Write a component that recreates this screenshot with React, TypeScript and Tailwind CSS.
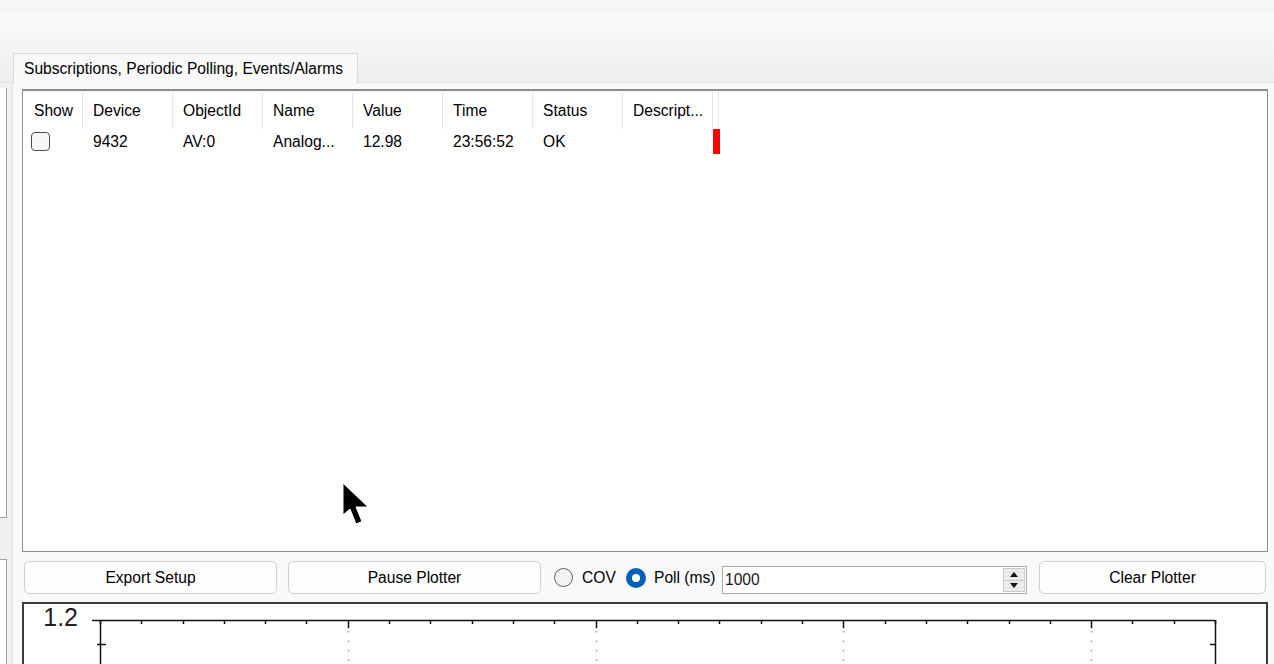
import React from 'react';

const columns = [
  { key: 'device', label: 'Device' },
  { key: 'objectId', label: 'ObjectId' },
  { key: 'name', label: 'Name' },
  { key: 'value', label: 'Value' },
  { key: 'time', label: 'Time' },
  { key: 'status', label: 'Status' },
  { key: 'description', label: 'Descript...' },
];

const row: Record<string, string> = {
  device: '9432',
  objectId: 'AV:0',
  name: 'Analog...',
  value: '12.98',
  time: '23:56:52',
  status: 'OK',
  description: '',
};

function Plotter() {
  // tick spacing on the top axis: 27 steps from x=76 to x=1191
  const step = (1191 - 76) / 27;
  const ticks = Array.from({ length: 28 }, (_, i) => 76 + i * step);

  return (
    <div className="w-[1246px] h-[80px] mt-[8px] border-2 border-[#3c3c3c] bg-white">
      <svg width="1242" height="76" className="block">
        <text
          x="54"
          y="22"
          textAnchor="end"
          fontSize="25"
          fill="#1f1f1f"
          fontFamily="'Liberation Sans', Arial, sans-serif"
        >
          1.2
        </text>
        <line x1="68" y1="16.5" x2="1191" y2="16.5" stroke="#111" strokeWidth="1.5" />
        <line x1="76.5" y1="16" x2="76.5" y2="76" stroke="#111" strokeWidth="1.5" />
        <line x1="1191.5" y1="16" x2="1191.5" y2="76" stroke="#111" strokeWidth="1.5" />
        <line x1="73" y1="40.5" x2="82" y2="40.5" stroke="#111" strokeWidth="1.5" />
        <line x1="1186" y1="40.5" x2="1191" y2="40.5" stroke="#111" strokeWidth="1.5" />
        {ticks.map((x, i) => {
          const major = i % 6 === 0 && i > 0;
          const xr = Math.round(x) + 0.5;
          return (
            <g key={i}>
              <line x1={xr} y1="16" x2={xr} y2={major ? 24 : 20} stroke="#111" strokeWidth="1.5" />
              {major && (
                <line
                  x1={xr}
                  y1="27"
                  x2={xr}
                  y2="76"
                  stroke="#9a9a9a"
                  strokeWidth="1.5"
                  strokeDasharray="1.5 8"
                />
              )}
            </g>
          );
        })}
      </svg>
    </div>
  );
}

export default function App() {
  return (
    <div className="relative w-[1274px] h-[664px] overflow-hidden bg-[#f9f9f9] text-[15.6px] text-black font-['Liberation_Sans',Arial,sans-serif]">
      <div className="h-[14px] bg-[#f6f6f6]" />
      <div className="h-[69px] bg-gradient-to-b from-[#fbfbfb] to-[#eeeeee] border-b border-[#e3e3e3] flex items-end pl-[13px]">
        <div className="h-[30px] w-[345px] -mb-px pl-[10px] flex items-center bg-[#f9f9f9] border border-b-0 border-[#d9d9d9] whitespace-nowrap">
          Subscriptions, Periodic Polling, Events/Alarms
        </div>
      </div>

      <div className="flex h-[581px]">
        {/* left docked panels */}
        <div className="w-[12px] bg-[#f0f0f0] flex flex-col">
          <div className="w-[7px] h-[430px] mt-[5px] bg-[#fcfcfc] border-r border-b border-[#a0a0a0]" />
          <div className="w-[7px] flex-1 mt-[41px] bg-[#fcfcfc] border-r border-t border-[#a0a0a0]" />
        </div>

        {/* tab page */}
        <div className="flex-1 border-l border-[#e3e3e3] pl-[9px] pt-[6px]">
          <div className="w-[1246px] h-[463px] bg-white border border-t-2 border-[#8a8d92]">
            <div className="flex h-[37px] mt-px">
              <div className="w-[60px] pl-[11px] flex items-center border-r border-[#e5e5e5]">Show</div>
              {columns.map((c) => (
                <div
                  key={c.key}
                  className="w-[90px] pl-[10px] flex items-center border-r border-[#e5e5e5] whitespace-nowrap"
                >
                  {c.label}
                </div>
              ))}
              <div className="w-[6px] border-r border-[#e5e5e5]" />
            </div>
            <div className="flex h-[25px]">
              <div className="w-[60px] pl-[8px] flex items-center">
                <div className="w-[19px] h-[19px] rounded-[4px] border border-[#4d4d4d] bg-[#f7f7f7]" />
              </div>
              {columns.map((c) => (
                <div key={c.key} className="w-[90px] pl-[10px] flex items-center whitespace-nowrap">
                  {row[c.key]}
                </div>
              ))}
              <div className="w-[7px] bg-[#ff0000]" />
            </div>
          </div>

          {/* controls */}
          <div className="flex items-center h-[33px] mt-[9px] pl-[2px]">
            <button className="w-[253px] h-[33px] rounded-[5px] border border-[#d0d0d0] bg-[#fdfdfd]">
              Export Setup
            </button>
            <button className="w-[253px] h-[33px] ml-[11px] rounded-[5px] border border-[#d0d0d0] bg-[#fdfdfd]">
              Pause Plotter
            </button>
            <div className="ml-[13px] w-[19px] h-[19px] rounded-full border border-[#5c5c5c] bg-[#f3f3f3]" />
            <span className="ml-[9px] w-[35px] whitespace-nowrap">COV</span>
            <div className="ml-[9px] w-[20px] h-[20px] rounded-full bg-[#005fb8] flex items-center justify-center">
              <div className="w-[8px] h-[8px] rounded-full bg-white" />
            </div>
            <span className="ml-[8px] w-[59px] whitespace-nowrap">Poll (ms)</span>
            <div className="ml-[9px] w-[305px] h-[28px] mt-[5px] border border-[#ababab] bg-white flex">
              <div className="flex-1 pl-[2px] flex items-center text-[#1a1a1a]">1000</div>
              <div className="w-[22px] mr-[1px] my-[1px] border border-[#c8c8c8] bg-[#ececec] flex flex-col">
                <div className="flex-1 flex items-center justify-center border-b border-[#c8c8c8]">
                  <svg width="8" height="5" viewBox="0 0 8 5">
                    <path d="M0 5 L4 0 L8 5 Z" fill="#111" />
                  </svg>
                </div>
                <div className="flex-1 flex items-center justify-center">
                  <svg width="8" height="5" viewBox="0 0 8 5">
                    <path d="M0 0 L8 0 L4 5 Z" fill="#111" />
                  </svg>
                </div>
              </div>
            </div>
            <button className="w-[227px] h-[33px] ml-[12px] rounded-[5px] border border-[#d0d0d0] bg-[#fdfdfd]">
              Clear Plotter
            </button>
          </div>

          <Plotter />
        </div>
      </div>

      {/* mouse pointer */}
      <svg className="absolute left-[342px] top-[482px]" width="28" height="44" viewBox="0 0 28 44">
        <path d="M1 1 V33 L8 27 L14 42 L20 39.5 L14 25 H26 Z" fill="#000" stroke="#fff" strokeWidth="1" />
      </svg>
    </div>
  );
}
